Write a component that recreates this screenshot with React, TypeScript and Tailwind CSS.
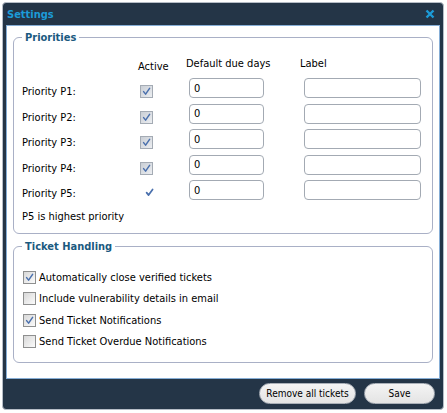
import React from "react";

/* ------------------------------------------------------------------ */
/* Small pieces                                                       */
/* ------------------------------------------------------------------ */

const Check = ({ color = "#3d68ad", w = 1.5 }: { color?: string; w?: number }) => (
  <svg width="9" height="9" viewBox="0 0 9 9" className="block">
    <path
      d="M1.6 4.6 L3.6 7.1 L7.6 1.4"
      stroke={color}
      strokeWidth={w}
      fill="none"
      strokeLinecap="round"
      strokeLinejoin="round"
    />
  </svg>
);

// greyed out box used in the priorities grid
function DisabledBox() {
  return (
    <span className="flex h-[13px] w-[13px] items-center justify-center border border-[#a4abb4] bg-linear-to-br from-[#c9ced5] to-[#eceef1]">
      <Check color="#4a70ad" />
    </span>
  );
}

function Box({ checked }: { checked: boolean }) {
  return (
    <span className="flex h-[13px] w-[13px] shrink-0 items-center justify-center border border-[#8e8f8f] bg-linear-to-br from-[#d8d8d8] to-[#fbfbfb]">
      {checked && <Check color="#4a70ad" />}
    </span>
  );
}

function TextBox({ value, w }: { value?: string; w: string }) {
  return (
    <div
      className={`${w} flex h-[20px] items-center rounded-[4px] border border-[#a3aab3] bg-white pl-[4px] text-[11px] text-black`}
    >
      {value}
    </div>
  );
}

/* ------------------------------------------------------------------ */
/* Data                                                               */
/* ------------------------------------------------------------------ */

const priorities = [
  { name: "Priority P1:", box: true },
  { name: "Priority P2:", box: true },
  { name: "Priority P3:", box: true },
  { name: "Priority P4:", box: true },
  { name: "Priority P5:", box: false },
];

const handling = [
  { text: "Automatically close verified tickets", on: true },
  { text: "Include vulnerability details in email", on: false },
  { text: "Send Ticket Notifications", on: true },
  { text: "Send Ticket Overdue Notifications", on: false },
];

/* ------------------------------------------------------------------ */
/* Main component                                                     */
/* ------------------------------------------------------------------ */

export default function App() {
  return (
    <div className="h-[413px] w-[447px] bg-white pl-[2px] pt-[2px] font-['DejaVu_Sans_Condensed','DejaVu_Sans',sans-serif] text-[11px] leading-[13px] text-black">
      <div className="flex h-[408px] w-[442px] flex-col rounded-[4px] border border-[#b6bdc7] bg-[#243547] px-[3px]">
        {/* ---------------- title bar ---------------- */}
        <div className="flex h-[22px] items-center justify-between pl-[1px] pr-[5px]">
          <span className="font-bold text-[#1c9bd8]">Settings</span>
          <svg width="10" height="10" viewBox="0 0 10 10">
            <path
              d="M1.5 1.5 L8.5 8.5 M8.5 1.5 L1.5 8.5"
              stroke="#1c9bd8"
              strokeWidth="2.4"
            />
          </svg>
        </div>

        {/* ---------------- body ---------------- */}
        <div className="h-[354px] border border-[#86aed6] bg-white px-[6px] pt-[5px]">
          {/* priorities */}
          <fieldset className="rounded-[6px] border border-[#a9b0c6] px-[8px] pb-[10px]">
            <legend className="px-[3px] font-bold text-[#1b5a7f]">Priorities</legend>

            <div className="mt-[13px] grid grid-cols-[116px_48px_114px_1fr]">
              <span />
              <span className="pt-[3px]">Active</span>
              <span>Default due days</span>
              <span>Label</span>
            </div>

            <div className="mt-[5px] flex flex-col">
              {priorities.map((p) => (
                <div
                  key={p.name}
                  className="grid h-[25.5px] grid-cols-[116px_48px_114px_1fr] items-start"
                >
                  <span className="pt-[7px]">{p.name}</span>
                  <span className="pl-[2px] pt-[7px]">
                    {p.box ? (
                      <DisabledBox />
                    ) : (
                      <span className="block pl-[5px] pt-[1px]">
                        <Check color="#4a70ad" w={1.7} />
                      </span>
                    )}
                  </span>
                  <span className="pl-[3px]">
                    <TextBox value="0" w="w-[75px]" />
                  </span>
                  <span className="pl-[4px]">
                    <TextBox w="w-[117px]" />
                  </span>
                </div>
              ))}
            </div>

            <div className="mt-[4px]">P5 is highest priority</div>
          </fieldset>

          {/* ticket handling */}
          <fieldset className="mt-[6px] rounded-[6px] border border-[#a9b0c6] px-[8px] pb-[9px]">
            <legend className="px-[3px] font-bold text-[#1b5a7f]">Ticket Handling</legend>
            <div className="mt-[14px] flex flex-col">
              {handling.map((h) => (
                <label key={h.text} className="flex h-[21.5px] items-center gap-[3px] pl-[1px]">
                  <Box checked={h.on} />
                  <span>{h.text}</span>
                </label>
              ))}
            </div>
          </fieldset>
        </div>

        {/* ---------------- footer ---------------- */}
        <div className="flex justify-end gap-[8px] pr-[5px] pt-[4px]">
          <button className="h-[21px] w-[97px] rounded-full border border-[#aab0b8] bg-linear-to-b from-[#f4f4f4] to-[#e4e4e4] text-[10px] text-black">
            Remove all tickets
          </button>
          <button className="h-[21px] w-[71px] rounded-full border border-[#aab0b8] bg-linear-to-b from-[#f4f4f4] to-[#e4e4e4] text-[10px] text-black">
            Save
          </button>
        </div>
      </div>
    </div>
  );
}
